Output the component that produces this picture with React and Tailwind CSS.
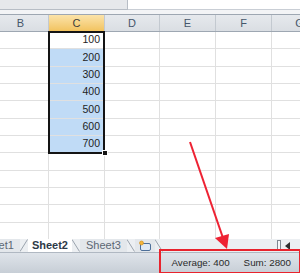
import React from 'react';

const cols = [
    { label: 'B', w: 'w-[56px]' },
    { label: 'C', w: 'w-[56px]', active: true },
    { label: 'D', w: 'w-[55px]' },
    { label: 'E', w: 'w-[56px]' },
    { label: 'F', w: 'w-[56px]' },
    { label: 'G', w: 'w-[56px]' },
];

const values = [100, 200, 300, 400, 500, 600, 700];
const rowCount = 12;

const Slant = ({ flip }) => (
    <svg width="8" height="13" viewBox="0 0 8 13" className="shrink-0">
        {flip
            ? <path d="M0 0.5 L7.5 12.5" stroke="#9aa3ad" strokeWidth="1" fill="none" />
            : <path d="M7.5 0.5 L0 12.5" stroke="#9aa3ad" strokeWidth="1" fill="none" />}
    </svg>
);

const App = () => {
    return (
        <div className="relative w-[300px] h-[273px] overflow-hidden bg-white flex flex-col" style={{ fontFamily: '"Liberation Sans", Arial, sans-serif' }}>
            {/* formula bar remnants */}
            <div className="flex h-[10px] shrink-0">
                <div className="w-[128px] bg-[#e6e8eb] border-r border-b border-[#b7bdc5]" />
                <div className="flex-1 bg-white border-b border-[#c9ced5]" />
            </div>
            <div className="h-[4px] shrink-0 bg-[#f3f4f6]" />

            {/* column headers */}
            <div className="flex h-[18px] shrink-0 ml-[-7px] border-t border-b border-[#9ea7b2] bg-gradient-to-b from-[#e6e9ed] to-[#dadee3]">
                {cols.map(c => (
                    <div key={c.label}
                        className={`${c.w} shrink-0 flex items-center justify-center text-[11px] border-r border-[#c3c9d0] ${c.active ? 'bg-gradient-to-b from-[#fbe3a9] to-[#f2c35e] text-[#3c3c3c]' : 'text-[#46566a]'}`}>
                        {c.label}
                    </div>
                ))}
            </div>

            {/* grid */}
            <div className="flex-1 min-h-0 overflow-hidden flex flex-col ml-[-7px]">
                {Array.from({ length: rowCount }).map((_, r) => (
                    <div key={r} className="flex h-[17.33px] shrink-0">
                        {cols.map(c => {
                            const val = c.active ? values[r] : undefined;
                            const bg = c.active && r > 0 && r < values.length ? 'bg-[#c0dbf6]' : 'bg-white';
                            return (
                                <div key={c.label}
                                    className={`${c.w} shrink-0 border-r border-b border-[#e0e0e0] ${bg} flex items-center justify-end pr-[4px] text-[10.5px] text-[#1e1e1e]`}>
                                    {val}
                                </div>
                            );
                        })}
                    </div>
                ))}
            </div>

            {/* sheet tabs */}
            <div className="flex items-stretch h-[13px] shrink-0 bg-[#eceff2] text-[11px] leading-none">
                <div className="flex items-center h-full pr-[6px] bg-[#e3e7eb] text-[#5b6673] -ml-[21px]">
                    <span className="pb-[1px]">Sheet1</span>
                </div>
                <Slant />
                <div className="flex items-center h-full px-[4px] bg-white font-bold text-[#2d3a48]">
                    <span className="pb-[1px]">Sheet2</span>
                </div>
                <Slant flip />
                <div className="flex items-center h-full px-[6px] bg-[#e3e7eb] text-[#5b6673]">
                    <span className="pb-[1px]">Sheet3</span>
                </div>
                <Slant flip />
                <div className="flex items-center h-full px-[3px] bg-[#e3e7eb]">
                    <svg width="14" height="11" viewBox="0 0 14 11">
                        <rect x="2.5" y="3.5" width="10" height="7" rx="1.5" fill="#dfe9f5" stroke="#4d6f99" />
                        <circle cx="3.5" cy="3" r="2" fill="#f6b73c" stroke="#d08a12" strokeWidth="0.6" />
                    </svg>
                </div>
                <Slant flip />
                <div className="flex-1" />
                <div className="flex items-center h-full gap-[4px] pr-[9px]">
                    <div className="w-[4px] h-[11px] border border-[#7f8790] bg-[#f5f6f8]" />
                    <svg width="6" height="8" viewBox="0 0 6 8">
                        <path d="M5 0 L0 4 L5 8 Z" fill="#2f2f2f" />
                    </svg>
                </div>
            </div>

            {/* status bar */}
            <div className="h-[21px] shrink-0 flex items-center bg-gradient-to-b from-[#dfe4ea] to-[#c7ced6] border-t border-[#b0b8c2] text-[9.8px] text-[#2a2a2a]">
                <div className="flex-1" />
                <span className="mr-[14px]">Average: 400</span>
                <span className="mr-[9px]">Sum: 2800</span>
            </div>

            {/* selection outline */}
            <div className="absolute left-[48px] top-[31px] w-[57px] h-[123px] border-[2px] border-[#141414] pointer-events-none" />
            <div className="absolute left-[102px] top-[150px] w-[6px] h-[6px] bg-[#141414] border border-white pointer-events-none" />

            {/* annotation */}
            <div className="absolute left-[159px] top-[249px] w-[142px] h-[25px] border-2 border-[#e8232d] pointer-events-none" />
            <svg className="absolute left-0 top-0 pointer-events-none" width="300" height="273" viewBox="0 0 300 273">
                <path d="M190 142 L223 238" stroke="#ee2233" strokeWidth="2" fill="none" />
                <path d="M215 238 L229 234 L227 249 Z" fill="#ee2233" />
            </svg>
        </div>
    );
};

export default App;
